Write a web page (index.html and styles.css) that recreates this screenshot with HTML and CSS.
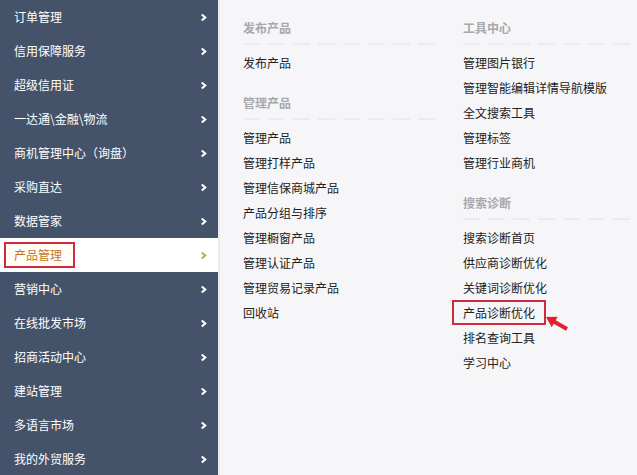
FILE: index.html
```html
<!DOCTYPE html>
<html lang="zh">
<head>
<meta charset="utf-8">
<title>产品管理</title>
<link rel="stylesheet" href="styles.css">
</head>
<body>
<div class="page">
  <nav class="sidebar">
    <ul class="nav">
      <li class="nav-item"><span class="nav-text">订单管理</span><svg class="chev" viewBox="0 0 8 10"><polyline points="2,1.5 6,5 2,8.5"/></svg></li>
      <li class="nav-item"><span class="nav-text">信用保障服务</span><svg class="chev" viewBox="0 0 8 10"><polyline points="2,1.5 6,5 2,8.5"/></svg></li>
      <li class="nav-item"><span class="nav-text">超级信用证</span><svg class="chev" viewBox="0 0 8 10"><polyline points="2,1.5 6,5 2,8.5"/></svg></li>
      <li class="nav-item"><span class="nav-text">一达通\金融\物流</span><svg class="chev" viewBox="0 0 8 10"><polyline points="2,1.5 6,5 2,8.5"/></svg></li>
      <li class="nav-item"><span class="nav-text">商机管理中心（询盘）</span><svg class="chev" viewBox="0 0 8 10"><polyline points="2,1.5 6,5 2,8.5"/></svg></li>
      <li class="nav-item"><span class="nav-text">采购直达</span><svg class="chev" viewBox="0 0 8 10"><polyline points="2,1.5 6,5 2,8.5"/></svg></li>
      <li class="nav-item"><span class="nav-text">数据管家</span><svg class="chev" viewBox="0 0 8 10"><polyline points="2,1.5 6,5 2,8.5"/></svg></li>
      <li class="nav-item active"><span class="nav-text marked">产品管理</span><svg class="chev" viewBox="0 0 8 10"><polyline points="2,1.5 6,5 2,8.5"/></svg></li>
      <li class="nav-item"><span class="nav-text">营销中心</span><svg class="chev" viewBox="0 0 8 10"><polyline points="2,1.5 6,5 2,8.5"/></svg></li>
      <li class="nav-item"><span class="nav-text">在线批发市场</span><svg class="chev" viewBox="0 0 8 10"><polyline points="2,1.5 6,5 2,8.5"/></svg></li>
      <li class="nav-item"><span class="nav-text">招商活动中心</span><svg class="chev" viewBox="0 0 8 10"><polyline points="2,1.5 6,5 2,8.5"/></svg></li>
      <li class="nav-item"><span class="nav-text">建站管理</span><svg class="chev" viewBox="0 0 8 10"><polyline points="2,1.5 6,5 2,8.5"/></svg></li>
      <li class="nav-item"><span class="nav-text">多语言市场</span><svg class="chev" viewBox="0 0 8 10"><polyline points="2,1.5 6,5 2,8.5"/></svg></li>
      <li class="nav-item"><span class="nav-text">我的外贸服务</span><svg class="chev" viewBox="0 0 8 10"><polyline points="2,1.5 6,5 2,8.5"/></svg></li>
    </ul>
  </nav>
  <main class="content">
    <section class="col col-left">
      <div class="group">
        <h3 class="heading">发布产品</h3>
        <ul class="links">
          <li>发布产品</li>
        </ul>
      </div>
      <div class="group">
        <h3 class="heading">管理产品</h3>
        <ul class="links">
          <li>管理产品</li>
          <li>管理打样产品</li>
          <li>管理信保商城产品</li>
          <li>产品分组与排序</li>
          <li>管理橱窗产品</li>
          <li>管理认证产品</li>
          <li>管理贸易记录产品</li>
          <li>回收站</li>
        </ul>
      </div>
    </section>
    <section class="col col-right">
      <div class="group">
        <h3 class="heading">工具中心</h3>
        <ul class="links">
          <li>管理图片银行</li>
          <li>管理智能编辑详情导航模版</li>
          <li>全文搜索工具</li>
          <li>管理标签</li>
          <li>管理行业商机</li>
        </ul>
      </div>
      <div class="group">
        <h3 class="heading">搜索诊断</h3>
        <ul class="links">
          <li>搜索诊断首页</li>
          <li>供应商诊断优化</li>
          <li>关键词诊断优化</li>
          <li class="marked-row"><span class="marked-link">产品诊断优化</span><svg class="pointer" viewBox="0 0 24 24"><path d="M1 9 L12.7 8.8 L10.7 12.3 L23 19.3 L21 22.7 L8.7 15.7 L6.7 19.2 Z"/></svg></li>
          <li>排名查询工具</li>
          <li>学习中心</li>
        </ul>
      </div>
    </section>
  </main>
</div>
</body>
</html>
```

FILE: styles.css
```css
* {
  box-sizing: border-box;
}

html, body {
  margin: 0;
  padding: 0;
}

body {
  width: 637px;
  height: 475px;
  overflow: hidden;
  font-family: "Noto Sans CJK SC", "Noto Sans", sans-serif;
  font-size: 12px;
  background: #f6f6f8;
}

.page {
  display: flex;
  height: 475px;
}

.sidebar {
  width: 218px;
  flex: none;
  background: #44536a;
}

.nav {
  list-style: none;
  margin: 0;
  padding: 0;
}

.nav-item {
  height: 34px;
  display: flex;
  align-items: center;
  justify-content: space-between;
  padding: 0 11px 0 14px;
  color: #ffffff;
  line-height: 20px;
}

.nav-item.active {
  background: #ffffff;
  color: #c5731f;
}

.nav-text.marked {
  display: inline-block;
  margin-left: -10px;
  padding: 0 11px 0 8px;
  height: 26px;
  line-height: 22px;
  border: 2px solid #cf2a3e;
  background: #fffdf6;
}

.chev {
  width: 7px;
  height: 9px;
  fill: none;
  stroke: #ffffff;
  stroke-width: 2.4;
}

.active .chev {
  stroke: #b6b34a;
}

.content {
  flex: 1;
  display: flex;
  border-left: 2px solid #ebebf1;
  background: #f6f6f8;
}

.col-left {
  width: 243px;
  padding-left: 20px;
  padding-right: 23px;
}

.col-right {
  flex: 1;
}

.group {
  padding-top: 15px;
}

.heading {
  margin: 0;
  font-size: 12px;
  font-weight: bold;
  color: #a8a8ad;
  line-height: 25px;
  padding-left: 3px;
}

.col-right .heading {
  padding-left: 0;
}

.heading::after {
  content: "";
  display: block;
  height: 2px;
  margin-top: 3px;
  background: repeating-linear-gradient(90deg, #ececf0 0 17px, transparent 17px 25px);
}

.links {
  list-style: none;
  margin: 5px 0 0;
  padding: 0 0 0 3px;
  color: #222222;
}

.col-right .links {
  padding-left: 0;
}

.links li {
  line-height: 25px;
  height: 25px;
}

.marked-row {
  position: relative;
}

.marked-link {
  display: inline-block;
  margin-left: -11px;
  padding: 0 9px 0 9px;
  height: 25px;
  line-height: 21px;
  border: 2px solid #cf2a3e;
}

.pointer {
  position: absolute;
  left: 82px;
  top: 8px;
  width: 24px;
  height: 24px;
  fill: #e0202e;
}
```
